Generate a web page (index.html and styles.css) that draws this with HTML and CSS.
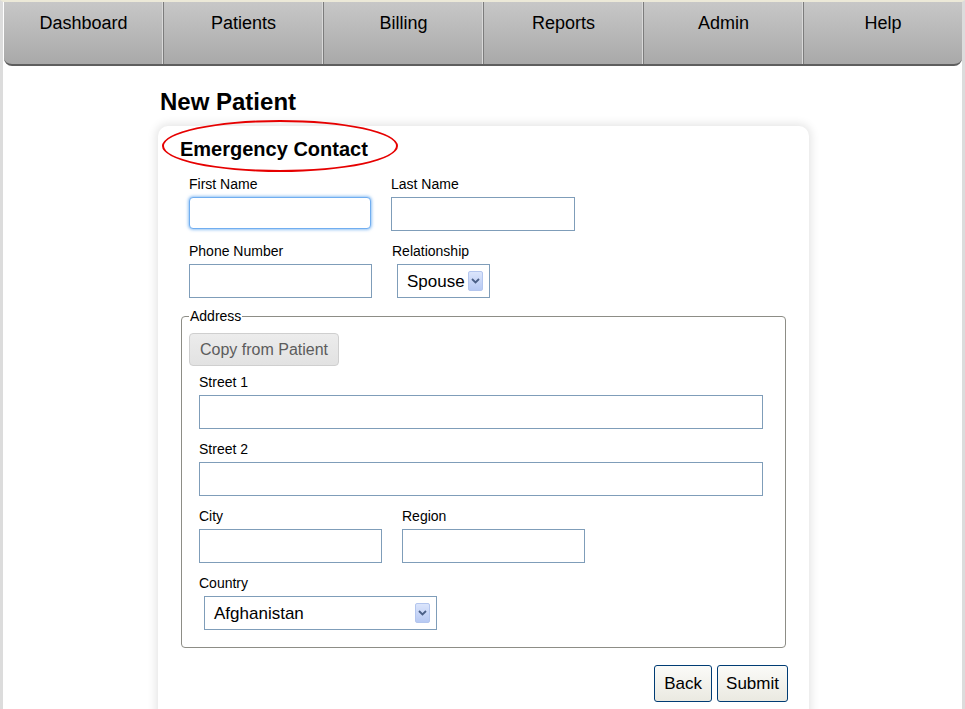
FILE: index.html
```html
<!DOCTYPE html>
<html>
<head>
<meta charset="utf-8">
<title>New Patient</title>
<link rel="stylesheet" href="styles.css">
</head>
<body>
<div class="frame">
  <nav class="nav">
    <a class="tab">Dashboard</a>
    <a class="tab">Patients</a>
    <a class="tab">Billing</a>
    <a class="tab">Reports</a>
    <a class="tab">Admin</a>
    <a class="tab tab-last">Help</a>
  </nav>
  <div class="page">
    <h1 class="title">New Patient</h1>
    <div class="card">
      <h2 class="card-title">Emergency Contact</h2>
      <span class="highlight"></span>
      <div class="form">
        <div class="row">
          <div class="field">
            <label class="lbl">First Name</label>
            <input class="inp inp-focus" type="text">
          </div>
          <div class="field">
            <label class="lbl">Last Name</label>
            <input class="inp inp-wide" type="text">
          </div>
        </div>
        <div class="row row-last">
          <div class="field">
            <label class="lbl">Phone Number</label>
            <input class="inp" type="text">
          </div>
          <div class="field">
            <label class="lbl lbl-rel">Relationship</label>
            <div class="sel sel-rel"><span class="sel-text">Spouse</span><span class="arrow"><svg width="9" height="6" viewBox="0 0 9 6"><path d="M1 1 L4.5 4.5 L8 1" fill="none" stroke="#4a5f86" stroke-width="1.8"/></svg></span></div>
          </div>
        </div>
        <fieldset class="address">
          <legend class="legend">Address</legend>
          <button class="copy" type="button">Copy from Patient</button>
          <div class="frow">
            <label class="lbl">Street 1</label>
            <input class="inp inp-full" type="text">
          </div>
          <div class="frow">
            <label class="lbl">Street 2</label>
            <input class="inp inp-full" type="text">
          </div>
          <div class="frow row">
            <div class="field">
              <label class="lbl">City</label>
              <input class="inp" type="text">
            </div>
            <div class="field">
              <label class="lbl">Region</label>
              <input class="inp" type="text">
            </div>
          </div>
          <div class="frow frow-last">
            <label class="lbl">Country</label>
            <div class="sel sel-country"><span class="sel-text">Afghanistan</span><span class="arrow"><svg width="9" height="6" viewBox="0 0 9 6"><path d="M1 1 L4.5 4.5 L8 1" fill="none" stroke="#4a5f86" stroke-width="1.8"/></svg></span></div>
          </div>
        </fieldset>
        <div class="actions">
          <button class="btn" type="button">Back</button>
          <button class="btn" type="button">Submit</button>
        </div>
      </div>
    </div>
  </div>
</div>
</body>
</html>
```

FILE: styles.css
```css
html, body {
  margin: 0;
  padding: 0;
  background: #ffffff;
}
body {
  font-family: "Liberation Sans", Arial, sans-serif;
  color: #000;
}
.frame {
  box-sizing: border-box;
  width: 965px;
  min-height: 709px;
  border-top: 2px solid #ece9d8;
  border-left: 3px solid #dcdcdc;
  border-right: 3px solid #dcdcdc;
  overflow: hidden;
}
.nav {
  display: flex;
  width: 958px;
  margin-left: 1px;
  height: 64px;
  box-sizing: border-box;
  background: linear-gradient(#c7c7c7, #a9a9a9);
  border-bottom: 2px solid #5e5e5e;
  border-radius: 0 0 8px 8px;
  overflow: hidden;
}
.tab {
  box-sizing: border-box;
  width: 160px;
  flex: none;
  text-align: center;
  font-size: 18px;
  line-height: 20px;
  padding-top: 11px;
  color: #000;
  border-right: 1px solid #7c7c7c;
  box-shadow: inset -1px 0 0 #d9d9d9;
}
.tab-last {
  flex: 1;
  width: auto;
  border-right: none;
  box-shadow: none;
}
.page {
  padding-left: 155px;
}
.title {
  margin: 22px 0 10px 2px;
  font-size: 24px;
  line-height: 28px;
  font-weight: bold;
}
.card {
  position: relative;
  box-sizing: border-box;
  width: 651px;
  min-height: 600px;
  background: #fff;
  border-radius: 10px;
  box-shadow: 0 0 10px 2px rgba(0, 0, 0, 0.11);
  padding: 12px 21px 20px 22px;
}
.card-title {
  margin: 0;
  font-size: 20px;
  line-height: 23px;
  font-weight: bold;
}
.highlight {
  position: absolute;
  left: 4px;
  top: -6px;
  width: 236px;
  height: 52px;
  box-sizing: border-box;
  border: 2px solid #e60000;
  border-radius: 50%;
}
.form {
  margin-top: 16px;
}
.row {
  display: flex;
  margin-left: 9px;
  margin-bottom: 13px;
}
.row-last {
  margin-bottom: 10px;
}
.field {
  width: 182px;
  margin-right: 20px;
}
.lbl {
  display: block;
  font-size: 14px;
  line-height: 14px;
  margin-bottom: 6px;
  color: #000;
}
.lbl-rel {
  margin-left: 1px;
}
.inp {
  display: block;
  box-sizing: border-box;
  width: 183px;
  height: 34px;
  border: 1px solid #7f9db9;
  background: #fff;
  margin: 0;
  padding: 0 4px;
  font-family: inherit;
  font-size: 16px;
  outline: none;
}
.inp-focus {
  width: 182px;
  height: 32px;
  border-color: #71aef0;
  border-radius: 4px;
  box-shadow: 0 0 3px 1px rgba(102, 170, 240, 0.7);
}
.inp-wide {
  width: 184px;
}
.inp-full {
  width: 564px;
}
.sel {
  box-sizing: border-box;
  display: flex;
  align-items: center;
  justify-content: space-between;
  height: 34px;
  border: 1px solid #7f9db9;
  background: #fff;
  padding: 0 6px 0 9px;
  font-size: 17px;
  margin-left: 6px;
}
.sel-text {
  padding-top: 2px;
}
.sel-rel {
  width: 93px;
}
.sel-country {
  width: 233px;
  margin-left: 5px;
  margin-top: 4px;
}
.arrow {
  box-sizing: border-box;
  width: 15px;
  height: 20px;
  display: flex;
  align-items: center;
  justify-content: center;
  background: linear-gradient(#dbe5fc, #b7c9f3);
  border: 1px solid #b4c6ee;
  border-radius: 2px;
}
.address {
  box-sizing: border-box;
  width: 605px;
  margin: 0 0 0 1px;
  padding: 0 20px 17px 7px;
  border: 1px solid #8d8d86;
  border-radius: 4px;
}
.legend {
  padding: 0 1px;
  font-size: 14px;
  line-height: 16px;
}
.copy {
  display: block;
  box-sizing: border-box;
  width: 150px;
  height: 33px;
  margin-top: 9px;
  margin-bottom: 9px;
  padding: 0;
  border: 1px solid #cfcfcf;
  border-radius: 4px;
  background: linear-gradient(#ececec, #e2e2e2);
  color: #5c5c5c;
  font-family: inherit;
  font-size: 16px;
}
.frow {
  margin-left: 10px;
  margin-bottom: 13px;
}
.frow.row {
  margin-left: 10px;
}
.frow .field {
  width: 183px;
}
.frow-last {
  margin-bottom: 0;
}
.actions {
  display: flex;
  justify-content: flex-end;
  gap: 5px;
  margin-top: 17px;
}
.btn {
  box-sizing: border-box;
  height: 37px;
  padding: 1px 9px 0;
  border: 1px solid #003c74;
  border-radius: 3px;
  background: linear-gradient(#fbfbf8, #eae9e1);
  font-family: inherit;
  font-size: 17px;
  color: #000;
}
.btn + .btn {
  padding: 1px 8px 0;
}
```
